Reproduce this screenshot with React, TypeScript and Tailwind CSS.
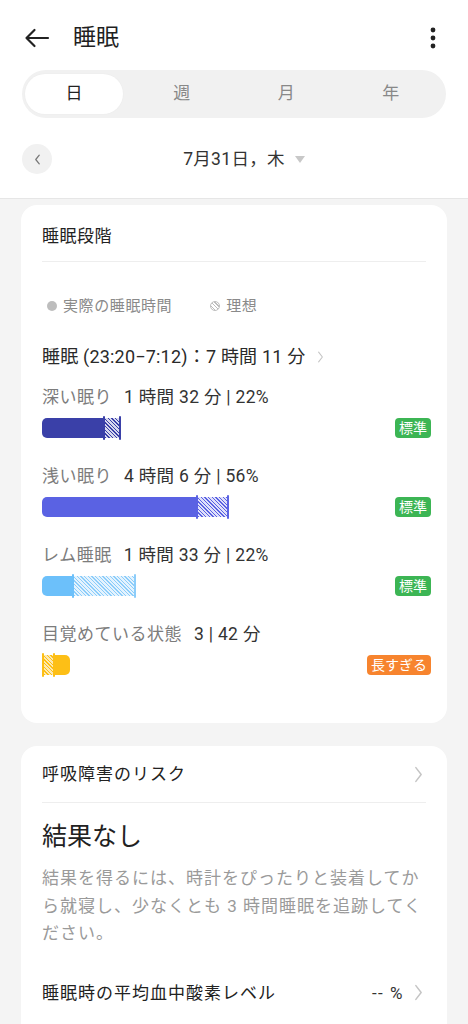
import type { ReactNode } from 'react';

const font = { fontFamily: "Roboto, 'Noto Sans CJK JP', sans-serif" };

function Chevron({ className }: { className: string }) {
  return (
    <svg viewBox="0 0 8 16" className={className} fill="none" stroke="currentColor" strokeWidth="1.4" strokeLinecap="round" strokeLinejoin="round">
      <path d="M1.5 1.5 L6.5 8 L1.5 14.5" />
    </svg>
  );
}

function Badge({ children, orange }: { children: ReactNode; orange?: boolean }) {
  return (
    <span
      className={
        orange
          ? '-mr-[5px] rounded-[4px] bg-[#f7842e] px-[4px] text-[14px] leading-[20px] text-white'
          : '-mr-[5px] rounded-[4px] bg-[#3cb554] px-[4px] text-[14px] leading-[20px] text-white'
      }
    >
      {children}
    </span>
  );
}

function Stage({
  label,
  value,
  bar,
  badge,
}: {
  label: string;
  value: string;
  bar: ReactNode;
  badge: ReactNode;
}) {
  return (
    <div className="mb-[25px]">
      <div className="flex items-baseline gap-[12px] leading-[22px]">
        <span className="text-[17px] tracking-[0.5px] text-[#7c7c7c]">{label}</span>
        <span className="text-[17.5px] tracking-[0.3px] text-[#333]">{value}</span>
      </div>
      <div className="mt-[8px] flex h-[24px] items-center justify-between">
        <div className="flex h-[24px] items-center">{bar}</div>
        {badge}
      </div>
    </div>
  );
}

export default function App() {
  return (
    <div className="min-h-[1024px] bg-[#f4f4f4]" style={font}>
      {/* header */}
      <div className="border-b border-[#e6e6e6] bg-white px-[22px] pb-[24px] pt-[20px]">
        <div className="flex h-[36px] items-center justify-between">
          <div className="flex items-center">
            <svg viewBox="0 0 26 20" className="ml-[2px] h-[20px] w-[26px]" fill="none" stroke="#222" strokeWidth="2.2" strokeLinecap="round" strokeLinejoin="round">
              <path d="M24 10 H2.5 M10.5 2 L2.5 10 L10.5 18" />
            </svg>
            <span className="ml-[23px] text-[23px] text-[#1f1f1f]">睡眠</span>
          </div>
          <svg viewBox="0 0 6 22" className="mr-[10px] h-[22px] w-[6px]" fill="#222">
            <circle cx="3" cy="3" r="2.4" />
            <circle cx="3" cy="11" r="2.4" />
            <circle cx="3" cy="19" r="2.4" />
          </svg>
        </div>

        <div className="mt-[14px] grid h-[48px] grid-cols-4 items-center rounded-full bg-[#f1f1f1] px-[3px]">
          <div className="flex h-[40px] w-[98px] items-center justify-center rounded-full bg-white text-[17px] text-[#222] shadow-[0_0_2px_rgba(0,0,0,0.04)]">日</div>
          <div className="text-center text-[17px] text-[#888]">週</div>
          <div className="text-center text-[17px] text-[#888]">月</div>
          <div className="text-center text-[17px] text-[#888]">年</div>
        </div>

        <div className="relative mt-[26px] flex h-[30px] items-center justify-center">
          <div className="absolute left-0 top-0 flex h-[30px] w-[30px] items-center justify-center rounded-full bg-[#f1f1f1]">
            <svg viewBox="0 0 8 12" className="h-[11px] w-[7px]" fill="none" stroke="#777" strokeWidth="1.4" strokeLinecap="round" strokeLinejoin="round">
              <path d="M6 1 L2 6 L6 11" />
            </svg>
          </div>
          <span className="ml-[20px] text-[17.5px] tracking-[0.3px] text-[#333]">7月31日，木</span>
          <svg viewBox="0 0 10 7" className="ml-[10px] h-[7px] w-[10px]" fill="#c8c8c8">
            <path d="M0 0 H10 L5 7 Z" />
          </svg>
        </div>
      </div>

      {/* sleep stages card */}
      <div className="mx-[21px] mt-[6px] rounded-[16px] bg-white px-[21px] pb-[21px] pt-[20px]">
        <div className="border-b border-[#eeeeee] pb-[14px] text-[17px] leading-[22px] tracking-[0.5px] text-[#222]">睡眠段階</div>

        <div className="mt-[34px] flex items-center text-[15px] leading-[20px] tracking-[0.6px] text-[#8a8a8a]">
          <span className="ml-[5px] h-[10px] w-[10px] rounded-full bg-[#bdbdbd]" />
          <span className="ml-[6px]">実際の睡眠時間</span>
          <span className="ml-[38px] h-[10px] w-[10px] rounded-full border border-[#bdbdbd] bg-[repeating-linear-gradient(45deg,#bdbdbd_0,#bdbdbd_1px,#fff_1px,#fff_2.5px)]" />
          <span className="ml-[6px]">理想</span>
        </div>

        <div className="mt-[29px] flex items-center text-[18px] leading-[24px] tracking-[0.2px] text-[#2a2a2a]">
          <span>睡眠 (23:20−7:12)：7 時間 11 分</span>
          <Chevron className="ml-[12px] h-[12px] w-[7px] text-[#c4c4c4]" />
        </div>

        <div className="mt-[17px]">
          <Stage
            label="深い眠り"
            value="1 時間 32 分 | 22%"
            badge={<Badge>標準</Badge>}
            bar={
              <>
                <div className="h-[20px] w-[61px] rounded-l-[5px] bg-[#3a40a8]" />
                <div className="h-[24px] w-[2px] rounded-full bg-[#3a40a8]" />
                <div className="h-[20px] w-[14px] bg-[repeating-linear-gradient(45deg,#3a40a8_0,#3a40a8_1px,#d7d8ee_1px,#d7d8ee_2.6px)]" />
                <div className="h-[24px] w-[2px] rounded-full bg-[#3a40a8]" />
              </>
            }
          />
          <Stage
            label="浅い眠り"
            value="4 時間 6 分 | 56%"
            badge={<Badge>標準</Badge>}
            bar={
              <>
                <div className="h-[20px] w-[154px] rounded-l-[5px] bg-[#5a62e3]" />
                <div className="h-[24px] w-[2px] rounded-full bg-[#5a62e3]" />
                <div className="h-[20px] w-[29px] bg-[repeating-linear-gradient(45deg,#5a62e3_0,#5a62e3_1px,#dfe0fa_1px,#dfe0fa_2.6px)]" />
                <div className="h-[24px] w-[2px] rounded-full bg-[#5a62e3]" />
              </>
            }
          />
          <Stage
            label="レム睡眠"
            value="1 時間 33 分 | 22%"
            badge={<Badge>標準</Badge>}
            bar={
              <>
                <div className="h-[20px] w-[30px] rounded-l-[5px] bg-[#6cc0fa]" />
                <div className="h-[24px] w-[2px] rounded-full bg-[#6cc0fa]" />
                <div className="h-[20px] w-[60px] bg-[repeating-linear-gradient(45deg,#8ccdfa_0,#8ccdfa_1px,#e4f3fe_1px,#e4f3fe_2.6px)]" />
                <div className="h-[24px] w-[2px] rounded-full bg-[#8ccdfa]" />
              </>
            }
          />
          <Stage
            label="目覚めている状態"
            value="3 | 42 分"
            badge={<Badge orange>長すぎる</Badge>}
            bar={
              <>
                <div className="h-[24px] w-[2px] rounded-full bg-[#fdbf16]" />
                <div className="h-[20px] w-[9px] bg-[repeating-linear-gradient(45deg,#fdbf16_0,#fdbf16_1px,#fde9b2_1px,#fde9b2_2.6px)]" />
                <div className="h-[24px] w-[2px] rounded-full bg-[#fdbf16]" />
                <div className="h-[20px] w-[15px] rounded-r-[5px] bg-[#fdbf16]" />
              </>
            }
          />
        </div>
      </div>

      {/* breathing card */}
      <div className="mx-[21px] mt-[23px] rounded-t-[16px] bg-white px-[21px] pb-[20px] pt-[17px]">
        <div className="flex items-center justify-between border-b border-[#eeeeee] pb-[17px] leading-[22px]">
          <span className="text-[17px] tracking-[1px] text-[#222]">呼吸障害のリスク</span>
          <Chevron className="mr-[3px] h-[17px] w-[9px] text-[#c4c4c4]" />
        </div>
        <div className="mt-[18px] text-[25px] leading-[32px] text-[#222]">結果なし</div>
        <p className="mt-[12px] text-[17px] leading-[27.5px] tracking-[1px] text-[#9a9a9a]">
          結果を得るには、時計をぴったりと装着してから就寝し、少なくとも 3 時間睡眠を追跡してください。
        </p>
        <div className="mt-[33px] flex items-center justify-between leading-[24px]">
          <span className="text-[17px] tracking-[1px] text-[#222]">睡眠時の平均血中酸素レベル</span>
          <div className="flex items-center">
            <span className="text-[17px] tracking-[1.5px] text-[#333]">--&nbsp;%</span>
            <Chevron className="ml-[10px] mr-[3px] h-[17px] w-[9px] text-[#c4c4c4]" />
          </div>
        </div>
      </div>
    </div>
  );
}
